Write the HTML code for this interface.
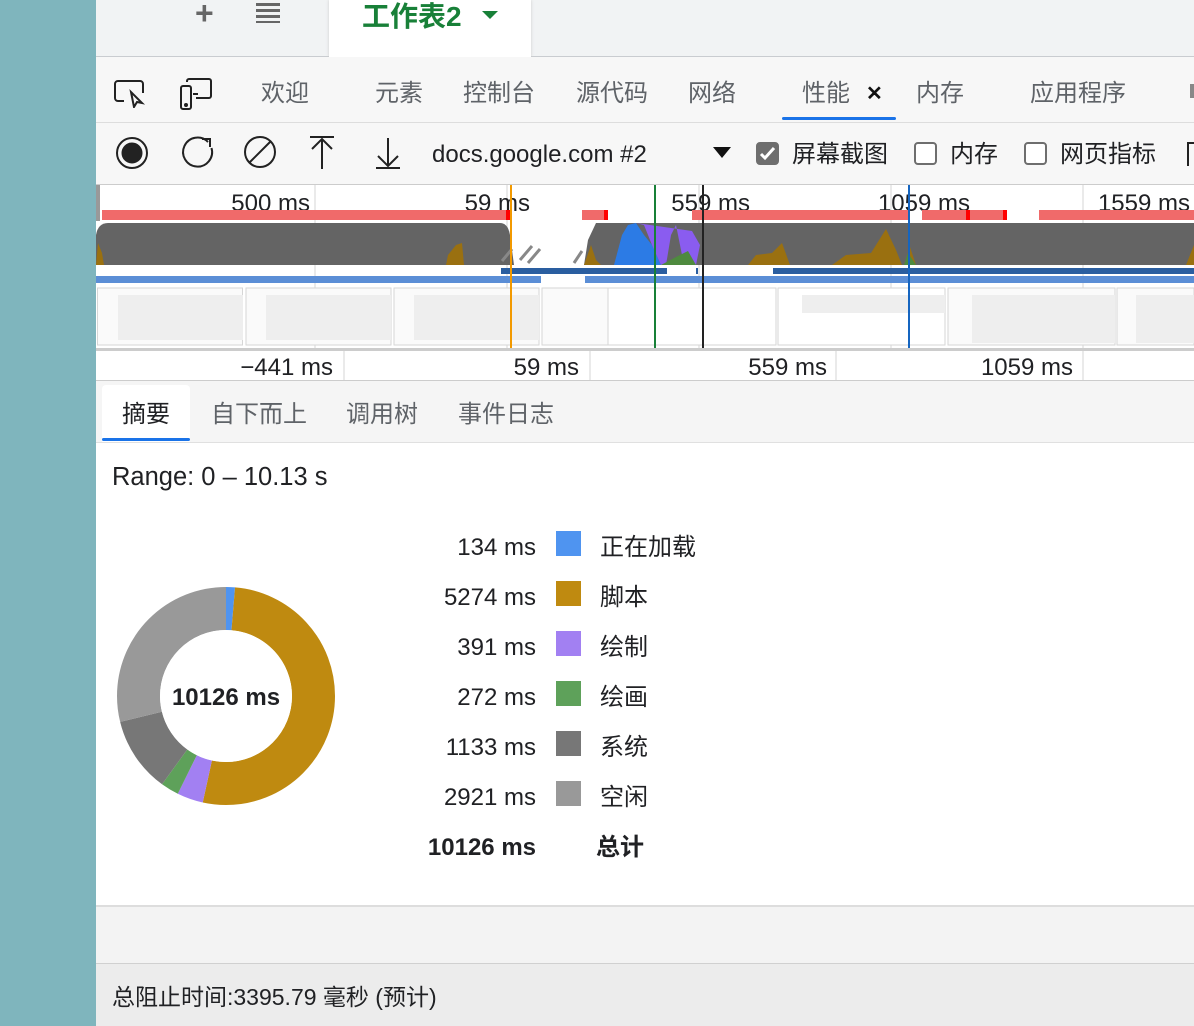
<!DOCTYPE html>
<html><head><meta charset="utf-8"><style>
*{margin:0;padding:0;box-sizing:border-box}
body{width:1194px;height:1026px;overflow:hidden;position:relative;background:#fff;font-family:"Liberation Sans","Noto Sans CJK SC",sans-serif;color:#202124}
.abs{position:absolute}
.side{left:0;top:0;width:96px;height:1026px;background:#7fb5bd}
.top{left:96px;top:0;width:1098px;height:57px;background:#f1f3f4;border-bottom:1px solid #c9ccd0}
.tabs{left:96px;top:57px;width:1098px;height:66px;background:#f7f7f7;border-bottom:1px solid #ddd}
.t{position:absolute;top:79px;font-size:24px;line-height:30px;color:#5f6368}
.tool{left:96px;top:123px;width:1098px;height:62px;background:#f7f7f7;border-bottom:1px solid #ccc}
.tt{position:absolute;font-size:24px;line-height:30px;color:#202124}
.cb{position:absolute;top:142px;width:23px;height:23px;border:2px solid #6e6e6e;border-radius:4px;background:#fff}
.sub{left:96px;top:380px;width:1098px;height:63px;background:#f5f5f5;border-top:1px solid #ccc;border-bottom:1px solid #e0e0e0}
.st{position:absolute;top:400px;font-size:24px;line-height:30px;color:#5f6368}
.lv{position:absolute;width:120px;text-align:right;left:416px;font-size:24px;line-height:30px;color:#202124}
.sw{position:absolute;left:556px;width:25px;height:25px}
.ll{position:absolute;left:600px;font-size:24px;line-height:30px}
</style></head><body>
<div class="abs side"></div>
<div class="abs top"></div>
<div class="abs" style="left:195px;top:0;font-size:32px;color:#666;line-height:26px;font-weight:bold">+</div>
<div class="abs" style="left:256px;top:3px;width:24px;height:20px;background:repeating-linear-gradient(#666 0 3px,transparent 3px 6px)"></div>
<div class="abs" style="left:329px;top:0;width:202px;height:57px;background:#fff;box-shadow:0 0 3px #ccc"></div>
<div class="abs" style="left:362px;top:0;font-size:28px;line-height:34px;color:#188038;font-weight:bold">工作表2</div>
<div class="abs" style="left:482px;top:11px;width:0;height:0;border-left:8px solid transparent;border-right:8px solid transparent;border-top:8px solid #188038"></div>
<div class="abs tabs"></div>
<svg class="abs" style="left:112px;top:78px" width="40" height="30" fill="none" stroke="#222" stroke-width="2"><path d="M12 23H6a3 3 0 0 1-3-3V6a3 3 0 0 1 3-3h22a3 3 0 0 1 3 3v9"/><path d="M19 14l3 15 3-5 5 1z"/></svg>
<svg class="abs" style="left:178px;top:77px" width="36" height="34" fill="none" stroke="#222" stroke-width="2"><rect x="3" y="9" width="10" height="23" rx="2"/><path d="M9 5V4a2 2 0 0 1 2-2h20a2 2 0 0 1 2 2v15a2 2 0 0 1-2 2H18M15 17h5"/><circle cx="8" cy="28" r="1" fill="#222"/></svg>
<div class="t" style="left:261px">欢迎</div>
<div class="t" style="left:375px">元素</div>
<div class="t" style="left:463px">控制台</div>
<div class="t" style="left:576px">源代码</div>
<div class="t" style="left:688px">网络</div>
<div class="t" style="left:802px">性能</div>
<div class="t" style="left:866px;color:#111;font-weight:bold;font-size:20px">✕</div>
<div class="abs" style="left:782px;top:117px;width:114px;height:3px;background:#1a73e8;border-radius:2px"></div>
<div class="t" style="left:916px">内存</div>
<div class="t" style="left:1030px">应用程序</div>
<div class="abs" style="left:1190px;top:84px;width:4px;height:14px;background:#888"></div>
<div class="abs tool"></div>
<svg class="abs" style="left:112px;top:134px" width="300" height="40" fill="none" stroke="#222" stroke-width="2"><circle cx="20" cy="19" r="15"/><circle cx="20" cy="19" r="9.5" fill="#222"/><path d="M96 8a14.5 14.5 0 1 0 3.5 6M90 5h8v8"/><circle cx="148" cy="18" r="15"/><path d="M138 28l20-20M198 3h24M210 35V5M200 15l10-10 10 10M276 4v28M266 22l10 10 10-10M264 34h24" /></svg>
<div class="tt" style="left:432px;top:140px">docs.google.com #2</div>
<div class="abs" style="left:713px;top:147px;border-left:9px solid transparent;border-right:9px solid transparent;border-top:11px solid #111"></div>
<div class="cb" style="left:756px;background:#6e6e6e"></div>
<svg class="abs" style="left:756px;top:142px" width="23" height="23"><path d="M5 12l4 4 9-10" fill="none" stroke="#fff" stroke-width="3"/></svg>
<div class="tt" style="left:792px;top:140px">屏幕截图</div>
<div class="cb" style="left:914px"></div>
<div class="tt" style="left:950px;top:140px">内存</div>
<div class="cb" style="left:1024px"></div>
<div class="tt" style="left:1060px;top:140px">网页指标</div>
<div class="abs" style="left:1187px;top:142px;width:8px;height:24px;border-left:2px solid #222;border-top:2px solid #222"></div>
<!-- timeline -->
<svg class="abs" style="left:96px;top:185px" width="1098" height="195">
<rect width="1098" height="195" fill="#fff"/>
<g stroke="#e3e3e3" stroke-width="1.5"><path d="M219 0V163M411 0V163M603 0V163M795 0V163M987 0V163M248 166V195M494 166V195M740 166V195M987 166V195"/></g>
<rect x="0" y="0" width="4" height="36" fill="#999"/>
<g font-size="24" fill="#202124" text-anchor="end" font-family="Liberation Sans"><text x="214" y="26">500 ms</text><text x="434" y="26">59 ms</text><text x="654" y="26">559 ms</text><text x="874" y="26">1059 ms</text><text x="1094" y="26">1559 ms</text>
<text x="237" y="190">−441 ms</text><text x="483" y="190">59 ms</text><text x="731" y="190">559 ms</text><text x="977" y="190">1059 ms</text></g>
<g fill="#f06a6a"><rect x="6" y="25" width="408" height="10"/><rect x="486" y="25" width="26" height="10"/><rect x="596" y="25" width="218" height="10"/><rect x="826" y="25" width="84" height="10"/><rect x="943" y="25" width="155" height="10"/></g>
<g fill="#f00"><rect x="410" y="25" width="4" height="10"/><rect x="508" y="25" width="4" height="10"/><rect x="870" y="25" width="4" height="10"/><rect x="907" y="25" width="4" height="10"/></g>
<path d="M0 80V50Q2 38 12 38H404Q412 38 414 50L418 80Z" fill="#646464"/>
<path d="M0 80L2 58 6 68 8 80ZM350 80L352 70 360 60 366 58 368 80Z" fill="#9a7010"/>
<path d="M488 80L492 55 500 38H1098V80Z" fill="#646464"/>
<path d="M488 80L495 60 500 75 505 80ZM652 80L660 70 676 68 686 58 694 80ZM736 80L750 70 775 68 790 44 800 65 806 80ZM808 80L814 62 820 80ZM1090 80L1098 60V80Z" fill="#9a7010"/>
<path d="M518 80L526 50 532 40 540 38 548 50 556 60 565 80Z" fill="#2c7be5"/>
<path d="M540 38L548 40 556 60 565 80 570 80 575 50 580 40 586 70 590 80 600 80 604 60 596 46Z" fill="#8a5cf0"/>
<path d="M565 80L580 72 592 66 600 80Z" fill="#4e8a3e"/>
<path d="M808 80L812 68 820 80Z" fill="#4e8a3e"/>
<g stroke="#888" stroke-width="3"><path d="M424 75l12-14M432 78l12-14M406 76l10-12M478 78l8-12"/></g>
<rect x="405" y="83" width="166" height="6" fill="#2a5ea0"/><rect x="600" y="83" width="2" height="6" fill="#2a5ea0"/><rect x="677" y="83" width="421" height="6" fill="#2a5ea0"/>
<rect x="0" y="91" width="445" height="7" fill="#5b8ed6"/><rect x="489" y="91" width="609" height="7" fill="#5b8ed6"/>
<g fill="#fafafa" stroke="#d6d6d6"><rect x="1.5" y="103" width="145" height="57"/><rect x="150" y="103" width="145" height="57"/><rect x="298" y="103" width="145" height="57"/><rect x="446" y="103" width="145" height="57"/><rect x="512" y="103" width="168" height="57" fill="#fff"/><rect x="682" y="103" width="167" height="57" fill="#fff"/><rect x="852" y="103" width="167" height="57"/><rect x="1021" y="103" width="77" height="57"/></g>
<g fill="#eee"><rect x="22" y="110" width="125" height="45"/><rect x="170" y="110" width="125" height="45"/><rect x="318" y="110" width="125" height="45"/><rect x="706" y="110" width="143" height="18"/><rect x="876" y="110" width="143" height="48"/><rect x="1040" y="110" width="58" height="48"/></g>
<rect x="0" y="163" width="1098" height="3" fill="#ccc"/>
<rect x="414" y="0" width="2" height="163" fill="#f29900"/><rect x="558" y="0" width="2" height="163" fill="#188038"/><rect x="606" y="0" width="2" height="163" fill="#222"/><rect x="812" y="0" width="2" height="163" fill="#1565c0"/>
</svg>
<div class="abs sub"></div>
<div class="abs" style="left:102px;top:385px;width:88px;height:57px;background:#fff;border-radius:4px 4px 0 0"></div>
<div class="abs" style="left:102px;top:438px;width:88px;height:3px;background:#1a73e8;border-radius:2px"></div>
<div class="st" style="left:122px;color:#202124">摘要</div>
<div class="st" style="left:211px">自下而上</div>
<div class="st" style="left:346px">调用树</div>
<div class="st" style="left:458px">事件日志</div>
<div class="abs" style="left:112px;top:462px;font-size:25.5px;line-height:30px">Range: 0 – 10.13 s</div>
<svg class="abs" style="left:117px;top:587px" width="218" height="218"><g transform="rotate(-90 109 109)" fill="none" stroke-width="43">
<circle cx="109" cy="109" r="87.5" stroke="#4f94f0" stroke-dasharray="7.27 600" stroke-dashoffset="0"/>
<circle cx="109" cy="109" r="87.5" stroke="#bf8a10" stroke-dasharray="286.35 600" stroke-dashoffset="-7.27"/>
<circle cx="109" cy="109" r="87.5" stroke="#a280f2" stroke-dasharray="21.23 600" stroke-dashoffset="-293.62"/>
<circle cx="109" cy="109" r="87.5" stroke="#5ea15a" stroke-dasharray="14.77 600" stroke-dashoffset="-314.85"/>
<circle cx="109" cy="109" r="87.5" stroke="#777" stroke-dasharray="61.51 600" stroke-dashoffset="-329.62"/>
<circle cx="109" cy="109" r="87.5" stroke="#999" stroke-dasharray="158.7 600" stroke-dashoffset="-391.13"/>
</g><circle cx="109" cy="109" r="66" fill="#fff"/>
<text x="109" y="118" text-anchor="middle" font-size="24" font-weight="bold" font-family="Liberation Sans" fill="#202124">10126 ms</text></svg>
<div class="lv" style="top:533px">134 ms</div><div class="sw" style="top:531px;background:#4f94f0"></div><div class="ll" style="top:533px">正在加载</div>
<div class="lv" style="top:583px">5274 ms</div><div class="sw" style="top:581px;background:#bf8a10"></div><div class="ll" style="top:583px">脚本</div>
<div class="lv" style="top:633px">391 ms</div><div class="sw" style="top:631px;background:#a280f2"></div><div class="ll" style="top:633px">绘制</div>
<div class="lv" style="top:683px">272 ms</div><div class="sw" style="top:681px;background:#5ea15a"></div><div class="ll" style="top:683px">绘画</div>
<div class="lv" style="top:733px">1133 ms</div><div class="sw" style="top:731px;background:#777"></div><div class="ll" style="top:733px">系统</div>
<div class="lv" style="top:783px">2921 ms</div><div class="sw" style="top:781px;background:#999"></div><div class="ll" style="top:783px">空闲</div>
<div class="lv" style="top:833px;font-weight:bold">10126 ms</div><div class="ll" style="top:833px;left:596px;font-weight:bold">总计</div>
<div class="abs" style="left:96px;top:905px;width:1098px;height:58px;background:#f3f3f3;border-top:2px solid #ddd"></div>
<div class="abs" style="left:96px;top:963px;width:1098px;height:63px;background:#ececec;border-top:1px solid #d0d0d0"></div>
<div class="abs" style="left:112px;top:982px;font-size:23px;line-height:30px">总阻止时间:3395.79 毫秒 (预计)</div>
</body></html>
